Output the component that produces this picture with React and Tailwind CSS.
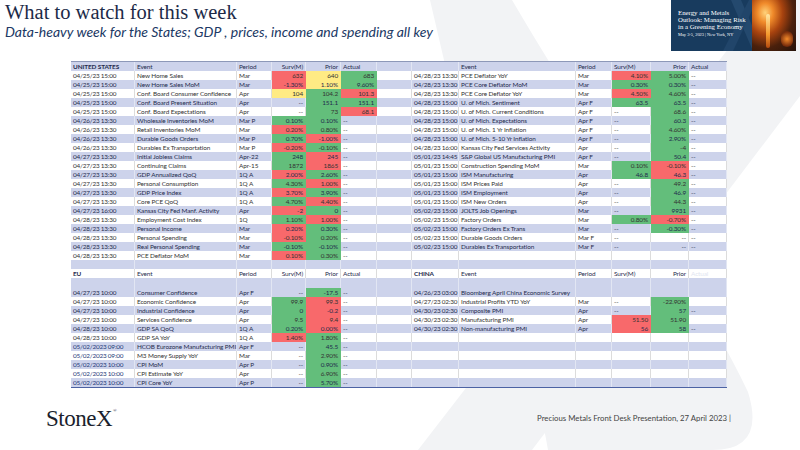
import clsx from "clsx";

// column tracks of the spreadsheet grid (left block, spacer, right block)
const COLS =
  "grid grid-cols-[64px_102px_35px_34px_35px_36px_35px_47px_117px_36px_39px_38px_38px]";

const FILL = {
  g: "bg-[#63be7b] border-[#63be7b]",
  r: "bg-[#f8696b] border-[#f8696b]",
  y: "bg-[#ffeb84] border-[#ffeb84]",
};

// [date, event, period, surv, prior, actual, fills(surv/prior/actual)]
const US_LEFT = [
  ["04/25/23 15:00", "New Home Sales", "Mar", "632", "640", "683", "ryg"],
  ["04/25/23 15:00", "New Home Sales MoM", "Mar", "-1.30%", "1.10%", "9.60%", "ryg"],
  ["04/25/23 15:00", "Conf. Board Consumer Confidence", "Apr", "104", "104.2", "101.3", "ygr"],
  ["04/25/23 15:00", "Conf. Board Present Situation", "Apr", "--", "151.1", "151.1", "-gg"],
  ["04/25/23 15:00", "Conf. Board Expectations", "Apr", "--", "73", "68.1", "-gr"],
  ["04/26/23 13:30", "Wholesale Inventories MoM", "Mar P", "0.10%", "0.10%", "--", "gg-"],
  ["04/26/23 13:30", "Retail Inventories MoM", "Mar", "0.20%", "0.80%", "--", "rg-"],
  ["04/26/23 13:30", "Durable Goods Orders", "Mar P", "0.70%", "-1.00%", "--", "gr-"],
  ["04/26/23 13:30", "Durables Ex Transportation", "Mar P", "-0.20%", "-0.10%", "--", "rg-"],
  ["04/27/23 13:30", "Initial Jobless Claims", "Apr-22", "248", "245", "--", "gr-"],
  ["04/27/23 13:30", "Continuing Claims", "Apr-15", "1872", "1865", "--", "gr-"],
  ["04/27/23 13:30", "GDP Annualized QoQ", "1Q A", "2.00%", "2.60%", "--", "rg-"],
  ["04/27/23 13:30", "Personal Consumption", "1Q A", "4.30%", "1.00%", "--", "gr-"],
  ["04/27/23 13:30", "GDP Price Index", "1Q A", "3.70%", "3.90%", "--", "rg-"],
  ["04/27/23 13:30", "Core PCE QoQ", "1Q A", "4.70%", "4.40%", "--", "gr-"],
  ["04/27/23 16:00", "Kansas City Fed Manf. Activity", "Apr", "-2", "0", "--", "rg-"],
  ["04/28/23 13:30", "Employment Cost Index", "1Q", "1.10%", "1.00%", "--", "gr-"],
  ["04/28/23 13:30", "Personal Income", "Mar", "0.20%", "0.30%", "--", "rg-"],
  ["04/28/23 13:30", "Personal Spending", "Mar", "-0.10%", "0.20%", "--", "rg-"],
  ["04/28/23 13:30", "Real Personal Spending", "Mar", "-0.10%", "-0.10%", "--", "gg-"],
  ["04/28/23 13:30", "PCE Deflator MoM", "Mar", "0.10%", "0.30%", "--", "rg-"],
];

const US_RIGHT = [
  ["04/28/23 13:30", "PCE Deflator YoY", "Mar", "4.10%", "5.00%", "--", "rg-"],
  ["04/28/23 13:30", "PCE Core Deflator MoM", "Mar", "0.30%", "0.30%", "--", "gg-"],
  ["04/28/23 13:30", "PCE Core Deflator YoY", "Mar", "4.50%", "4.60%", "--", "rg-"],
  ["04/28/23 15:00", "U. of Mich. Sentiment", "Apr F", "63.5", "63.5", "--", "gg-"],
  ["04/28/23 15:00", "U. of Mich. Current Conditions", "Apr F", "--", "68.6", "--", "-g-"],
  ["04/28/23 15:00", "U. of Mich. Expectations", "Apr F", "--", "60.3", "--", "-g-"],
  ["04/28/23 15:00", "U. of Mich. 1 Yr Inflation", "Apr F", "--", "4.60%", "--", "-g-"],
  ["04/28/23 15:00", "U. of Mich. 5-10 Yr Inflation", "Apr F", "--", "2.90%", "--", "-g-"],
  ["04/28/23 16:00", "Kansas City Fed Services Activity", "Apr", "--", "-4", "--", "-g-"],
  ["05/01/23 14:45", "S&P Global US Manufacturing PMI", "Apr F", "--", "50.4", "--", "-g-"],
  ["05/01/23 15:00", "Construction Spending MoM", "Mar", "0.10%", "-0.10%", "--", "gr-"],
  ["05/01/23 15:00", "ISM Manufacturing", "Apr", "46.8", "46.3", "--", "gr-"],
  ["05/01/23 15:00", "ISM Prices Paid", "Apr", "--", "49.2", "--", "-g-"],
  ["05/01/23 15:00", "ISM Employment", "Apr", "--", "46.9", "--", "-g-"],
  ["05/01/23 15:00", "ISM New Orders", "Apr", "--", "44.3", "--", "-g-"],
  ["05/02/23 15:00", "JOLTS Job Openings", "Mar", "--", "9931", "--", "-g-"],
  ["05/02/23 15:00", "Factory Orders", "Mar", "0.80%", "-0.70%", "--", "gr-"],
  ["05/02/23 15:00", "Factory Orders Ex Trans", "Mar", "--", "-0.30%", "--", "-g-"],
  ["05/02/23 15:00", "Durable Goods Orders", "Mar F", "--", "--", "--", "---"],
  ["05/02/23 15:00", "Durables Ex Transportation", "Mar F", "--", "--", "--", "---"],
];

const EU = [
  ["04/27/23 10:00", "Consumer Confidence", "Apr F", "--", "-17.5", "--", "-g-"],
  ["04/27/23 10:00", "Economic Confidence", "Apr", "99.9", "99.3", "--", "gr-"],
  ["04/27/23 10:00", "Industrial Confidence", "Apr", "0", "-0.2", "--", "gr-"],
  ["04/27/23 10:00", "Services Confidence", "Apr", "9.5", "9.4", "--", "gr-"],
  ["04/28/23 10:00", "GDP SA QoQ", "1Q A", "0.20%", "0.00%", "--", "gr-"],
  ["04/28/23 10:00", "GDP SA YoY", "1Q A", "1.40%", "1.80%", "--", "rg-"],
  ["05/02/2023 09:00", "HCOB Eurozone Manufacturing PMI", "Apr F", "--", "45.5", "--", "-g-"],
  ["05/02/2023 09:00", "M3 Money Supply YoY", "Mar", "--", "2.90%", "--", "-g-"],
  ["05/02/2023 10:00", "CPI MoM", "Apr P", "--", "0.90%", "--", "-g-"],
  ["05/02/2023 10:00", "CPI Estimate YoY", "Apr", "--", "6.90%", "--", "-g-"],
  ["05/02/2023 10:00", "CPI Core YoY", "Apr P", "--", "5.70%", "--", "-g-"],
];

const CHINA = [
  ["04/26/23 03:00", "Bloomberg April China Economic Survey", "", "", "", "", "---"],
  ["04/27/23 02:30", "Industrial Profits YTD YoY", "Mar", "--", "-22.90%", "", "-g-"],
  ["04/30/23 02:30", "Composite PMI", "Apr", "--", "57", "--", "-g-"],
  ["04/30/23 02:30", "Manufacturing PMI", "Apr", "51.50", "51.90", "", "rg-"],
  ["04/30/23 02:30", "Non-manufacturing PMI", "Apr", "56", "58", "--", "rg-"],
];

function Cell({ v, right, fill, bold, faint, lav, navy, tight }) {
  return (
    <div
      className={clsx(
        "whitespace-nowrap px-[2px] leading-[9px] border-r",
        fill ? FILL[fill] : lav ? "border-[#e2e6f3]" : "border-[#dcdcdc]",
        right && "text-right",
        bold && "font-bold",
        faint && "text-[#e1e5f1]",
        navy && "text-[#1f3a78]",
        tight && "tracking-[-0.2px]"
      )}
    >
      {v}
    </div>
  );
}

// one half of a data row; "--" in Surv is right aligned on the left block, left aligned on the right one
function Half({ row, side, lav }) {
  if (!row) {
    return Array.from({ length: 6 }, (_, i) => <Cell key={side + i} lav={lav} />);
  }
  const [date, event, period, surv, prior, actual, fills] = row;
  const f = (i) => (fills[i] === "-" ? null : fills[i]);
  const survRight = surv !== "--" || side === "L";
  return (
    <>
      <Cell v={date} lav={lav} navy={date.length > 14} tight />
      <Cell v={event} lav={lav} />
      <Cell v={period} lav={lav} />
      <Cell v={surv} right={survRight} fill={f(0)} lav={lav} />
      <Cell v={prior} right fill={f(1)} lav={lav} />
      <Cell v={actual} right={actual !== "--"} fill={f(2)} lav={lav} />
    </>
  );
}

function Row({ left, right, lav, tall }) {
  return (
    <div
      className={clsx(
        COLS,
        tall ? "h-[10px]" : "h-[9px]",
        lav ? "bg-[#cdd3eb] text-[#1f2b4d]" : "bg-white text-[#333]"
      )}
    >
      <Half row={left} side="L" lav={lav} />
      <Cell lav={lav} />
      <Half row={right} side="R" lav={lav} />
    </div>
  );
}

function Watermark() {
  return (
    <svg className="absolute inset-0 w-full h-full" viewBox="0 0 800 450">
      <path d="M430 0 L512 0 C600 150 700 290 748 392 Q766 450 712 450 L548 450 Q540 398 512 352 Z" fill="#f2f3f5" />
      <path d="M418 450 L532 450 L800 96 L800 0 L766 0 Z" fill="#f2f3f5" />
    </svg>
  );
}

function EventLogo() {
  return (
    <div className="relative flex w-[125px] h-[51px] bg-[#183b5e] overflow-hidden">
      <svg className="absolute left-[52px] top-0 h-full w-[40px]" viewBox="0 0 40 51">
        <path d="M8 0 L18 0 L40 51 L30 51 Z" fill="#24496e" />
        <path d="M0 51 L10 51 L34 0 L26 0 Z" fill="#21456a" />
      </svg>
      <div className="relative flex flex-col pl-[7px] pt-[9px] font-['Liberation_Serif',serif] text-white">
        <span className="text-[6.8px] leading-[7px]">Energy and Metals</span>
        <span className="text-[6.8px] leading-[7px]">Outlook: Managing Risk</span>
        <span className="text-[6.8px] leading-[7px]">in a Greening Economy</span>
        <span className="mt-[2px] text-[4.4px] leading-[5px]">May 3-5, 2023 | New York, NY</span>
      </div>
      {/* molten metal photo */}
      <div className="absolute right-0 top-0 h-full w-[44px] bg-[radial-gradient(ellipse_at_30%_25%,#ffd27a_0%,#f08a2a_18%,#a8430f_40%,#4a200c_65%,#24120a_100%)]">
        <div className="absolute left-[14px] top-[14px] h-[34px] w-[4px] rounded-full bg-[linear-gradient(#ffe7a3,#f59a2e_60%,#b4490f)]" />
        <div className="absolute right-[3px] bottom-[4px] h-[16px] w-[12px] rounded-full bg-[radial-gradient(circle,#f28a2a_0%,#7a2e0c_70%,transparent_100%)]" />
      </div>
    </div>
  );
}

export default function App() {
  const rows = [];
  for (let i = 0; i < 21; i++) {
    rows.push(<Row key={"us" + i} left={US_LEFT[i]} right={US_RIGHT[i]} lav={i % 2 === 1} />);
  }
  return (
    <div className="relative w-[800px] h-[450px] overflow-hidden bg-white font-['Lato','Liberation_Sans',sans-serif]">
      <Watermark />
      <div className="relative flex flex-col h-full">
        {/* title block + event banner */}
        <div className="flex justify-between">
          <div className="pl-[5px] pt-[1px]">
            <h1 className="font-['Liberation_Serif',serif] text-[20.5px] leading-[23px] text-[#1c2a48]">
              What to watch for this week
            </h1>
            <p className="italic text-[14px] leading-[16px] text-[#203864]">
              Data-heavy week for the States; GDP , prices, income and spending all key
            </p>
          </div>
          <div className="pr-[4px]">
            <EventLogo />
          </div>
        </div>

        {/* calendar sheet */}
        <div className="ml-[71px] mt-[10px] w-[656px] text-[6.4px] tracking-[-0.1px] border-t border-[#8d98b8] border-b border-b-[#4c62a3]">
          <div className={clsx(COLS, "h-[9px] bg-[#cdd3eb] text-[#1f2b4d]")}>
            <Cell v="UNITED STATES" bold lav />
            <Cell v="Event" lav />
            <Cell v="Period" lav />
            <Cell v="Surv(M)" right lav />
            <Cell v="Prior" right lav />
            <Cell v="Actual" lav />
            <Cell lav />
            <Cell lav />
            <Cell v="Event" lav />
            <Cell v="Period" lav />
            <Cell v="Surv(M)" lav />
            <Cell v="Prior" right lav />
            <Cell v="Actual" lav />
          </div>
          {rows}
          <Row lav />
          <div className={clsx(COLS, "h-[9px] bg-white text-[#1f2b4d]")}>
            <Cell v="EU" bold />
            <Cell v="Event" />
            <Cell v="Period" />
            <Cell v="Surv(M)" right />
            <Cell v="Prior" right />
            <Cell v="Actual" />
            <Cell />
            <Cell v="CHINA" bold />
            <Cell v="Event" />
            <Cell v="Period" />
            <Cell v="Surv(M)" />
            <Cell v="Prior" right />
            <Cell v="Actual" faint />
          </div>
          <Row lav tall />
          {EU.map((r, i) => (
            <Row key={"eu" + i} left={r} right={CHINA[i]} lav={i % 2 === 0} />
          ))}
        </div>

        {/* footer */}
        <div className="mt-[19px] flex items-center justify-between pl-[46px] pr-[69px]">
          <div className="flex items-start font-['Liberation_Serif',serif] text-[23px] leading-[24px] tracking-[-0.5px] text-[#1b1f2e]">
            StoneX<span className="ml-[1px] text-[5px] leading-[8px]">®</span>
          </div>
          <div className="text-[7.8px] text-[#444]">
            Precious Metals Front Desk Presentation, 27 April 2023 |
          </div>
        </div>
      </div>
    </div>
  );
}
